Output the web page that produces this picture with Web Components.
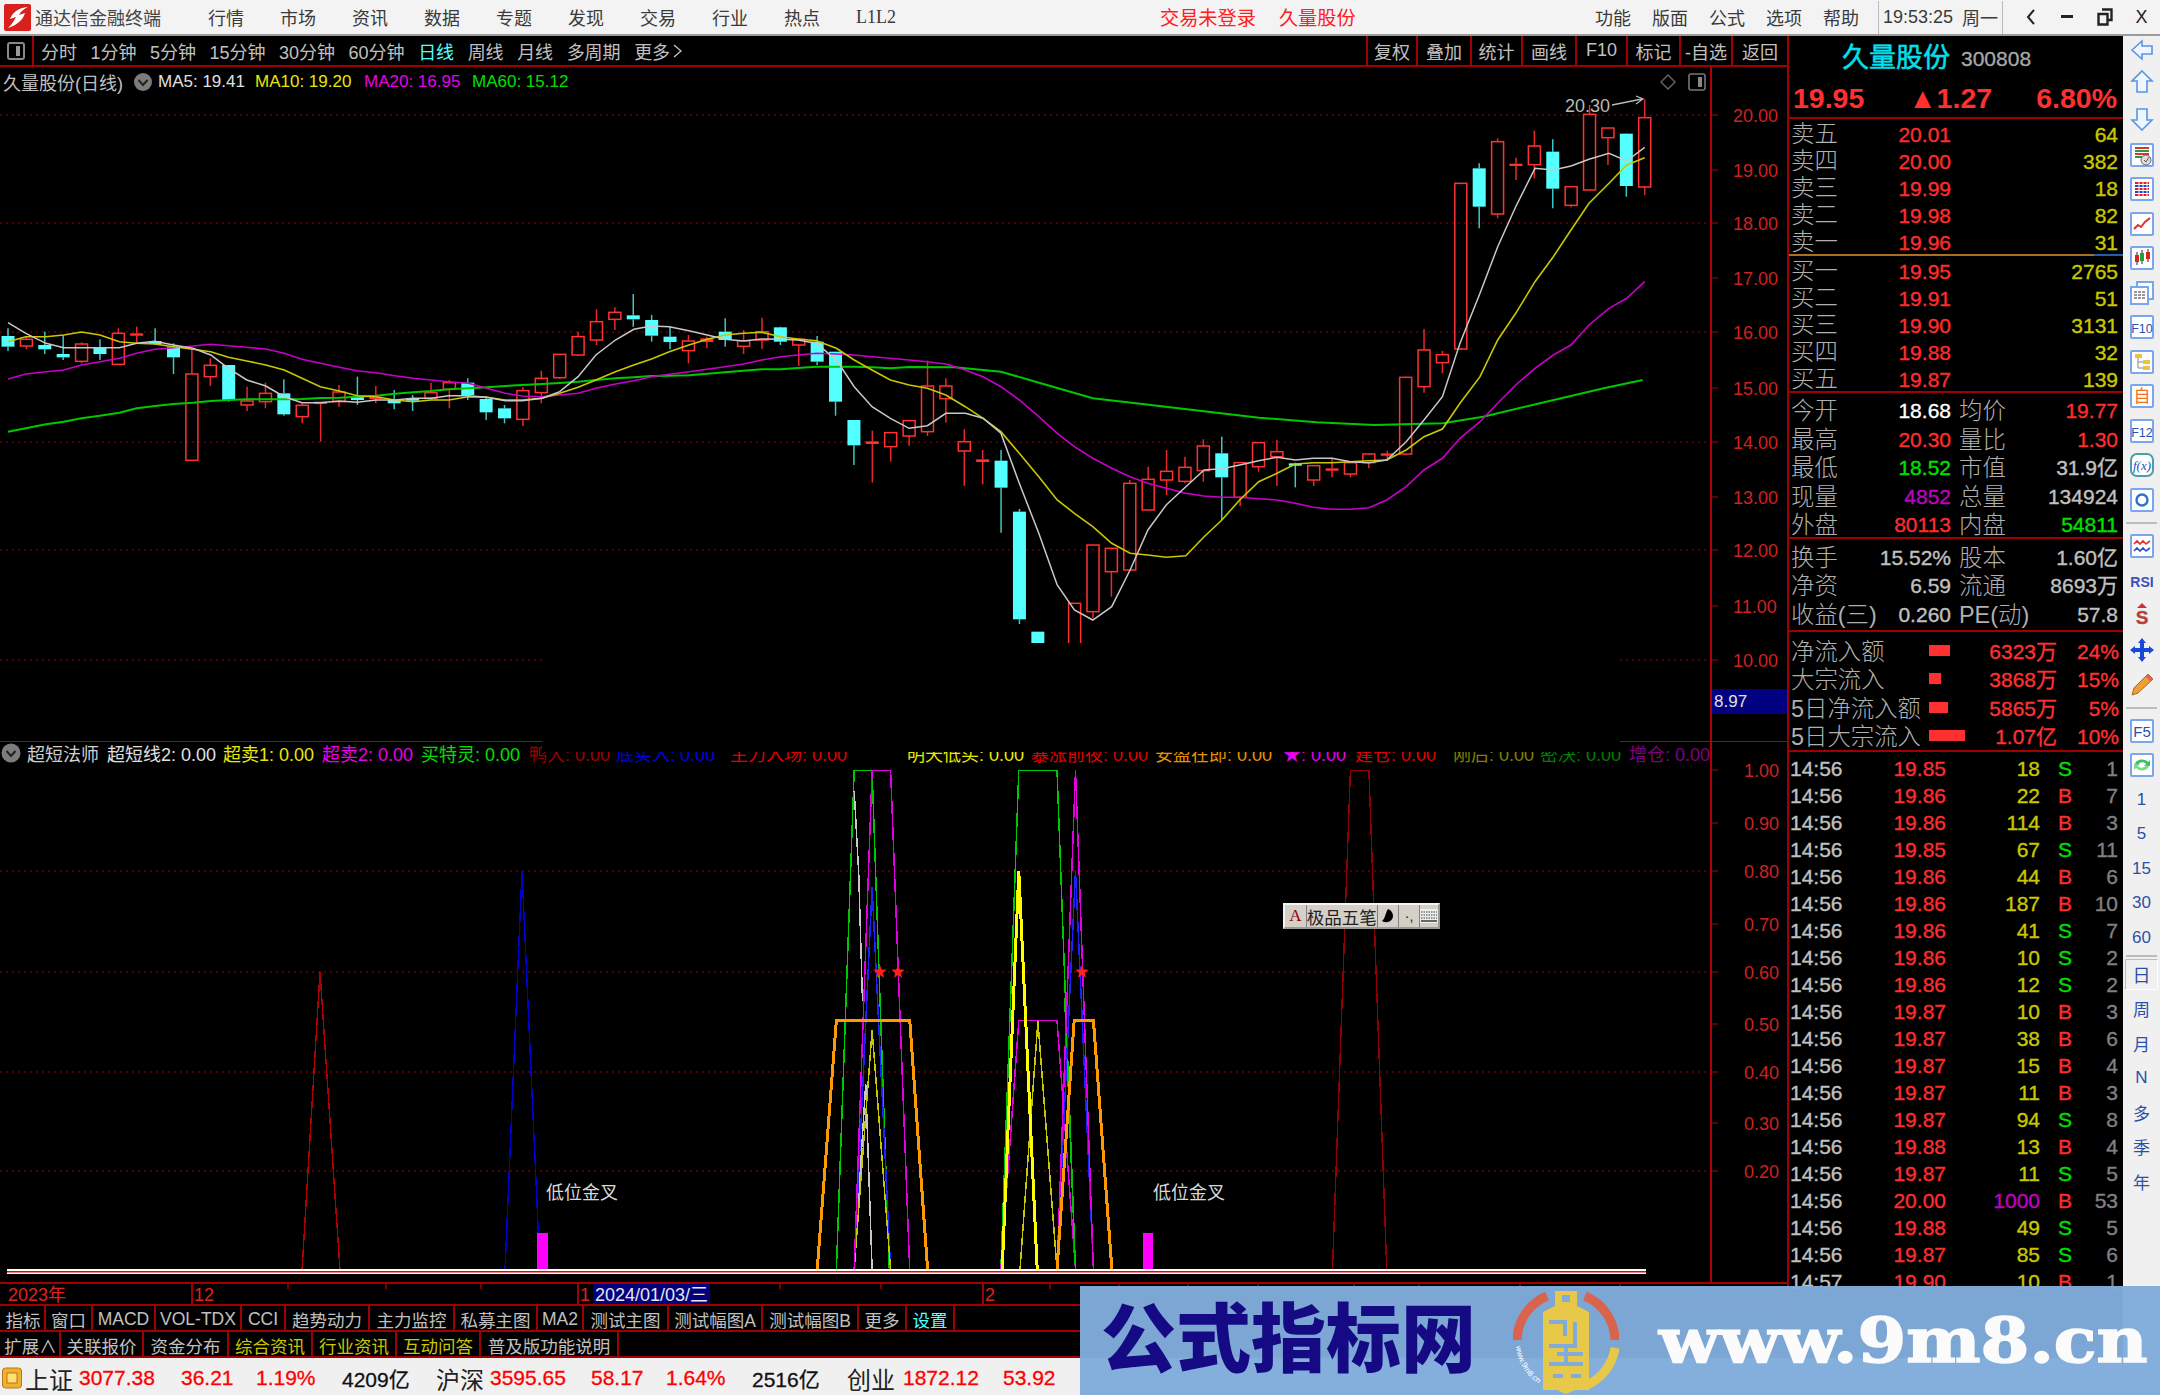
<!DOCTYPE html>
<html lang="zh">
<head>
<meta charset="utf-8">
<title>通达信金融终端</title>
<style>
html, body { margin: 0; background: #000; overflow: hidden; }
body { font-family: "Liberation Sans", "Noto Sans CJK SC", sans-serif; }
</style>
</head>
<body>
<tdx-app>
    <title-bar slot="title"></title-bar>
    <period-bar slot="period"></period-bar>
    <k-chart slot="kline"></k-chart>
    <sub-chart slot="sub"></sub-chart>
    <time-axis slot="axis"></time-axis>
    <tab-strip slot="tabs">
        <tab-item style="width:44px">指标</tab-item>
        <tab-item style="width:47px">窗口</tab-item>
        <tab-item style="width:63px">MACD</tab-item>
        <tab-item style="width:86px">VOL-TDX</tab-item>
        <tab-item style="width:44px">CCI</tab-item>
        <tab-item style="width:84px">趋势动力</tab-item>
        <tab-item style="width:85px">主力监控</tab-item>
        <tab-item style="width:83px">私募主图</tab-item>
        <tab-item style="width:46px">MA2</tab-item>
        <tab-item style="width:85px">测试主图</tab-item>
        <tab-item style="width:94px">测试幅图A</tab-item>
        <tab-item style="width:96px">测试幅图B</tab-item>
        <tab-item style="width:48px">更多</tab-item>
        <tab-item style="width:48px;color:#54ffff">设置</tab-item>
    </tab-strip>
    <tab-strip slot="tabs">
        <tab-item style="width:59px">扩展∧</tab-item>
        <tab-item style="width:83px">关联报价</tab-item>
        <tab-item style="width:85px">资金分布</tab-item>
        <tab-item style="width:84px;color:#c8c800">综合资讯</tab-item>
        <tab-item style="width:84px;color:#c8c800">行业资讯</tab-item>
        <tab-item style="width:84px;color:#c8c800">互动问答</tab-item>
        <tab-item style="width:138px">普及版功能说明</tab-item>
    </tab-strip>
    <status-strip slot="status"></status-strip>
    <quote-panel slot="panel"></quote-panel>
    <side-rail slot="rail">
        <rail-btn icon="left" style="height:28px"></rail-btn>
        <rail-btn icon="up" style="height:36px"></rail-btn>
        <rail-btn icon="down" style="height:37.5px"></rail-btn>
        <rail-btn icon="check"></rail-btn>
        <rail-btn icon="grid"></rail-btn>
        <rail-btn icon="line"></rail-btn>
        <rail-btn icon="candle"></rail-btn>
        <rail-btn icon="docs"></rail-btn>
        <rail-btn icon="f10"></rail-btn>
        <rail-btn icon="tree"></rail-btn>
        <rail-btn icon="self"></rail-btn>
        <rail-btn icon="f12"></rail-btn>
        <rail-btn icon="fx"></rail-btn>
        <rail-btn icon="ring"></rail-btn>
        <rail-sep></rail-sep>
        <rail-btn icon="wave"></rail-btn>
        <rail-btn icon="rsi"></rail-btn>
        <rail-btn icon="sup"></rail-btn>
        <rail-btn icon="move"></rail-btn>
        <rail-btn icon="pencil"></rail-btn>
        <rail-sep></rail-sep>
        <rail-btn icon="f5"></rail-btn>
        <rail-btn icon="refresh"></rail-btn>
        <rail-btn>1</rail-btn>
        <rail-btn>5</rail-btn>
        <rail-btn>15</rail-btn>
        <rail-btn>30</rail-btn>
        <rail-btn>60</rail-btn>
        <rail-sep style="height:2px"></rail-sep>
        <rail-btn pressed>日</rail-btn>
        <rail-btn>周</rail-btn>
        <rail-btn>月</rail-btn>
        <rail-btn>N</rail-btn>
        <rail-btn>多</rail-btn>
        <rail-btn>季</rail-btn>
        <rail-btn>年</rail-btn>
    </side-rail>
    <water-mark slot="mark"></water-mark>
</tdx-app>

<script>
const RED_LINE = "#a00000";

// 整体框架
class TdxApp extends HTMLElement {
    constructor() {
        super();
        this.attachShadow({ mode: "open" });
        this.shadowRoot.innerHTML = `
            <style>
                :host { display: block; position: relative; width: 2160px; height: 1395px; overflow: hidden; background: #000; }
                .row { display: flex; height: 1322px; }
                .left { display: flex; flex-direction: column; width: 1787px; border-right: 2px solid ${RED_LINE}; }
                .patch { position: absolute; left: 542px; top: 643px; width: 1078px; height: 109px; background: #000; }
            </style>
            <slot name="title"></slot>
            <div class="row">
                <div class="left">
                    <slot name="period"></slot>
                    <slot name="kline"></slot>
                    <slot name="sub"></slot>
                    <slot name="axis"></slot>
                    <slot name="tabs"></slot>
                </div>
                <slot name="panel"></slot>
                <slot name="rail"></slot>
            </div>
            <slot name="status"></slot>
            <div class="patch"></div>
            <slot name="mark"></slot>
        `;
    }
}

// 标题栏
class TitleBar extends HTMLElement {
    constructor() {
        super();
        this.attachShadow({ mode: "open" });
        const menu = ["行情", "市场", "资讯", "数据", "专题", "发现", "交易", "行业", "热点"];
        const right = ["功能", "版面", "公式", "选项", "帮助"];
        this.shadowRoot.innerHTML = `
            <style>
                :host { display: flex; align-items: center; box-sizing: border-box; height: 36px; background: #f3f3f3; border-bottom: 2px solid #9c9c9c; color: #3a3a3a; font-size: 18px; white-space: nowrap; }
                .logo { margin-left: 4px; width: 27px; height: 27px; }
                .name { margin-left: 4px; color: #444; }
                .menu { display: flex; gap: 36px; margin-left: 47px; }
                .alert { display: flex; gap: 23px; margin-left: 264px; color: #ff2020; font-size: 19.2px; }
                .right { display: flex; gap: 21px; margin-left: auto; }
                .clock { display: flex; align-items: center; gap: 9px; box-sizing: border-box; height: 33px; margin: 0 9px 0 19px; padding: 0 4px; border-left: 1px solid #bbb; border-right: 1px solid #bbb; width: 125px; }
                .win { display: flex; }
                .win span { display: flex; align-items: center; justify-content: center; width: 37px; height: 33px; color: #222; }
                .l2 { padding-top: 3px; font-family: "Liberation Serif", serif; }
            </style>
            <svg class="logo" viewBox="0 0 27 27">
                <rect width="27" height="27" rx="2" fill="#d8201c"/>
                <path d="M24 3 C14 4 9 8 6 15 L12 13 C10 17 8 20 4 24 C13 21 19 16 21 9 L15 11 C17 7 20 5 24 3Z" fill="#fff"/>
            </svg>
            <span class="name">通达信金融终端</span>
            <div class="menu">${menu.map((m) => `<span>${m}</span>`).join("")}<span class="l2">L1L2</span></div>
            <div class="alert"><span>交易未登录</span><span>久量股份</span></div>
            <div class="right">${right.map((m) => `<span>${m}</span>`).join("")}</div>
            <div class="clock"><span>19:53:25</span><span>周一</span></div>
            <div class="win">
                <span><svg width="12" height="20" viewBox="0 0 12 20"><path d="M9 3 L3 10 L9 17" fill="none" stroke="#222" stroke-width="2"/></svg></span>
                <span><svg width="14" height="6" viewBox="0 0 14 6"><rect y="1" width="12" height="3" fill="#222"/></svg></span>
                <span><svg width="16" height="18" viewBox="0 0 16 18"><path d="M5 1.5H14.5V12H11M1.5 6H10.5V16.5H1.5Z" fill="none" stroke="#222" stroke-width="2.4"/></svg></span>
                <span>X</span>
            </div>
        `;
    }
}

// 周期工具条
class PeriodBar extends HTMLElement {
    constructor() {
        super();
        this.attachShadow({ mode: "open" });
        const periods = ["分时", "1分钟", "5分钟", "15分钟", "30分钟", "60分钟", "日线", "周线", "月线", "多周期"];
        const tools = [["复权", 50], ["叠加", 54], ["统计", 51], ["画线", 54], ["F10", 51], ["标记", 53], ["-自选", 52], ["返回", 56]];
        this.shadowRoot.innerHTML = `
            <style>
                :host { display: flex; align-items: stretch; box-sizing: border-box; height: 31px; border-bottom: 2px solid ${RED_LINE}; color: #c0c0c0; font-size: 18px; white-space: nowrap; }
                .toggle { display: flex; align-items: center; justify-content: center; width: 34px; border-right: 2px solid ${RED_LINE}; box-sizing: border-box; }
                .periods { display: flex; align-items: center; gap: 13.5px; margin-left: 7px; }
                .on { color: #54ffff; }
                .more { display: flex; align-items: center; gap: 3px; }
                .tools { display: flex; margin-left: auto; }
                .tools span { display: flex; align-items: center; justify-content: center; box-sizing: border-box; border-left: 2px solid ${RED_LINE}; }
            </style>
            <div class="toggle"><svg width="20" height="20" viewBox="0 0 20 20"><rect x="2" y="2" width="16" height="16" rx="2" fill="none" stroke="#888" stroke-width="2"/><rect x="10" y="5" width="4" height="10" fill="#999"/></svg></div>
            <div class="periods">
                ${periods.map((p) => `<span class="${p === "日线" ? "on" : ""}">${p}</span>`).join("")}
                <span class="more">更多<svg width="9" height="16" viewBox="0 0 9 16"><path d="M1 2 L8 8 L1 14" fill="none" stroke="#c0c0c0" stroke-width="1.4"/></svg></span>
            </div>
            <div class="tools">${tools.map(([t, w]) => `<span style="width:${w}px">${t}</span>`).join("")}</div>
        `;
    }
}

// 缩放图坐标换算成页面坐标
const z10 = (p) => p.map(([x, y]) => [x / 1.742, 280 + y / 3]);
const z11 = (p) => p.map(([x, y]) => [800 + x / 1.742, 270 + y / 3]);
const z12 = (p) => p.map(([x, y]) => [1380 + x / 3, 60 + y / 3]);
const pts = (p) => p.map(([x, y]) => `${x.toFixed(1)},${y.toFixed(1)}`).join(" ");

// K线: [颜色, 上影, 实体上, 实体下, 下影]
const BARS10 = [
    ["c",145,168,200,213],["r",170,178,198,208],["c",155,195,208,222],["c",165,222,232,240],["r",187,192,244,250],
    ["c",178,202,222,240],["r",145,160,253,255],["r",140,160,167,190],["c",145,183,192,195],["c",190,200,232,282],
    ["r",205,282,541,542],["r",235,256,290,318],["c",255,255,360,365],["r",320,363,375,393],["r",308,340,365,385],
    ["c",298,340,403,407],["r",370,376,410,430],["r",365,365,368,485],["r",315,336,365,380],["c",290,348,360,375],
    ["r",318,350,355,370],["c",330,360,370,388],["c",345,355,357,393],["r",308,338,355,360],["r",300,308,328,385],
    ["c",295,308,345,360],["c",350,357,397,420],["c",375,385,415,430],["r",322,332,418,438],["r",272,295,338,370],
    ["r",222,223,293,297],["r",155,170,225,228],["r",88,125,180,195],["r",82,97,118,150],["c",42,106,118,140],
    ["c",105,120,167,185],["c",140,170,186,208],["r",165,183,212,250],["r",170,175,186,205],["c",115,155,180,200],
    ["r",150,182,199,222],["r",113,155,180,207],["c",140,142,185,195],["r",175,178,195,258],
];
const BARS11 = [
    ["c",198,215,275,285],["c",245,245,395,437],["c",450,450,526,585],["r",482,514,522,638],["r",487,488,530,575],
    ["r",450,452,498,527],["r",272,348,485,498],["r",325,348,386,458],["r",478,515,543,648],["r",540,568,576,643],
    ["c",540,572,653,788],["c",717,725,1048,1062],["c",1085,1085,1125,1125],["c",1140,1140,1235,1240],["r",1000,1000,1300,1320],
    ["r",825,825,1025,1045],["r",835,835,905,980],["r",630,640,900,900],["r",590,628,720,720],["r",540,604,630,675],
    ["r",560,592,634,640],["r",508,528,602,635],["c",500,550,622,750],["r",578,578,682,708],["r",518,518,590,605],
    ["r",510,545,560,648],["c",578,580,583,652],["r",585,587,630,648],["r",565,595,599,622],["r",575,578,612,622],
    ["r",550,552,578,595],["r",542,550,553,573],["r",320,322,552,553],["r",177,240,350,368],["r",243,254,278,310],
];
const BARS12 = [
    ["r",370,370,867,870],["c",310,325,440,505],["r",235,245,462,475],["r",293,311,315,360],["r",212,258,314,355],
    ["c",238,275,386,445],["r",378,380,436,442],["r",135,163,390,390],["r",204,204,233,315],["c",220,221,378,410],
    ["r",118,173,381,405],
];

const MA_LINES = [
    ["#00c800", 2, [
        ...z10([[14,455],[45,445],[80,433],[111,425],[142,415],[174,407],[208,398],[238,385],[270,378],[302,372],[336,368],[367,363],[398,360],[430,358],[463,358],[495,358],[526,357],[558,354],[591,353],[622,350],[655,347],[688,341],[720,337],[751,333],[782,328],[816,325],[848,322],[880,318],[910,315],[944,312],[975,309],[1007,305],[1038,300],[1072,295],[1104,292],[1135,288],[1166,287],[1200,286],[1232,281],[1263,277],[1295,272],[1327,268],[1360,268],[1390,264],[1422,260],[1457,260],[1488,260],[1519,262],[1551,265]]),
        ...z11([[190,291],[270,292],[350,305],[430,345],[510,385],[600,403],[700,423],[800,443],[900,457],[1000,465],[1120,460],[1190,440],[1300,395],[1400,355],[1468,330]]),
    ]],
    ["#c800c8", 1.6, [
        ...z10([[14,297],[45,282],[80,275],[111,270],[142,255],[174,245],[208,235],[238,220],[270,208],[302,203],[336,198],[367,193],[398,197],[430,202],[463,207],[495,220],[526,238],[558,250],[591,262],[622,272],[655,278],[688,287],[720,295],[751,300],[782,305],[816,310],[848,325],[880,340],[910,348],[944,350],[975,345],[1007,340],[1038,325],[1072,312],[1104,302],[1135,290],[1166,283],[1200,275],[1232,268],[1263,260],[1295,252],[1327,240],[1360,230],[1390,225],[1422,220],[1457,222],[1488,225],[1519,230],[1551,235]]),
        ...z11([[190,270],[222,275],[254,282],[288,300],[319,320],[350,350],[382,390],[416,440],[448,490],[478,530],[510,565],[543,595],[575,620],[606,640],[638,655],[672,670],[704,678],[735,682],[766,682],[799,686],[831,690],[863,700],[894,712],[927,718],[959,718],[991,713],[1022,690],[1056,650],[1087,600],[1119,565]]),
        ...z12([[240,1135],[300,1085],[353,1030],[407,975],[465,925],[520,885],[573,855],[627,795],[687,745],[740,715],[794,665]]),
    ]],
    ["#c8c800", 1.6, [
        ...z10([[14,185],[45,170],[80,170],[111,165],[142,156],[174,165],[208,185],[238,190],[270,192],[302,200],[336,208],[367,215],[398,232],[430,243],[463,255],[495,270],[526,295],[558,320],[591,333],[622,347],[655,350],[688,360],[720,365],[751,360],[782,360],[816,350],[848,352],[880,360],[910,360],[944,355],[975,340],[1007,322],[1038,300],[1072,275],[1104,255],[1135,237],[1166,215],[1200,195],[1232,178],[1263,165],[1295,160],[1327,157],[1360,170],[1390,177],[1422,182],[1457,205],[1488,240],[1519,270],[1551,300]]),
        ...z11([[190,345],[222,355],[254,375],[288,410],[319,445],[350,485],[382,550],[416,620],[448,690],[478,730],[510,770],[543,820],[575,850],[606,855],[638,862],[672,857],[704,800],[735,750],[766,690],[799,635],[831,610],[863,582],[894,578],[927,578],[959,575],[991,572],[1022,570],[1056,540],[1087,500],[1119,477]]),
        ...z12([[240,1030],[300,950],[353,840],[407,760],[465,665],[520,590],[573,510],[627,430],[687,370],[740,315],[794,293]]),
    ]],
    ["#c8c8c8", 1.5, [
        ...z10([[14,128],[45,160],[80,190],[111,203],[142,203],[174,203],[208,203],[238,190],[270,184],[302,195],[336,205],[367,225],[398,265],[430,300],[463,318],[495,350],[526,368],[558,368],[591,363],[622,367],[655,360],[688,360],[720,355],[751,355],[782,347],[816,347],[848,352],[880,362],[910,362],[944,355],[975,335],[1007,290],[1038,225],[1072,180],[1104,148],[1135,138],[1166,140],[1200,152],[1232,165],[1263,178],[1295,183],[1327,177],[1360,178],[1390,180],[1422,190],[1457,240],[1488,320],[1519,380],[1551,415]]),
        ...z11([[190,475],[222,467],[254,430],[288,430],[319,445],[350,490],[382,640],[416,790],[448,945],[478,1020],[510,1050],[543,1010],[575,900],[606,780],[638,705],[672,650],[704,600],[735,596],[766,585],[799,572],[831,562],[863,570],[894,565],[927,565],[959,575],[991,578],[1022,570],[1056,515],[1087,450],[1119,380]]),
        ...z12([[240,850],[300,700],[353,560],[407,440],[465,325],[520,330],[573,318],[627,298],[687,280],[740,303],[794,262]]),
    ]],
];

function drawBars() {
    const conv = [[BARS10, 280], [BARS11, 270], [BARS12, 60]];
    const all = [];
    conv.forEach(([list, off]) => list.forEach((b) => all.push([b[0], ...b.slice(1).map((v) => off + v / 3)])));
    return all.map(([c, wt, bt, bb, wb], i) => {
        const x = 8 + 18.39 * i;
        const col = c === "c" ? "#54ffff" : "#ff3232";
        const wick = c === "c" ? "#3cc8c8" : "#e82828";
        let s = "";
        if (wt < bt) s += `<line x1="${x}" x2="${x}" y1="${wt}" y2="${bt}" stroke="${wick}" stroke-width="1.5"/>`;
        if (wb > bb) s += `<line x1="${x}" x2="${x}" y1="${bb}" y2="${wb}" stroke="${wick}" stroke-width="1.5"/>`;
        if (c === "c" || bb - bt < 4) {
            s += `<rect x="${x - 6.5}" y="${bt}" width="13" height="${Math.max(bb - bt, 2.4)}" fill="${col}"/>`;
        } else {
            s += `<rect x="${x - 6}" y="${bt}" width="12" height="${bb - bt}" fill="none" stroke="${col}" stroke-width="1.5"/>`;
        }
        return s;
    }).join("");
}

// 主图
class KChart extends HTMLElement {
    constructor() {
        super();
        this.attachShadow({ mode: "open" });
        const axis = [["20.00",115],["19.00",170],["18.00",223],["17.00",278],["16.00",332],["15.00",388],["14.00",442],["13.00",497],["12.00",550],["11.00",606],["10.00",660]];
        const dots = [115, 223, 332, 442, 550, 660];
        this.shadowRoot.innerHTML = `
            <style>
                :host { display: block; position: relative; height: 674px; }
                svg { display: block; position: absolute; left: 0; top: 0; }
                text { font: 18px "Liberation Sans", sans-serif; }
                .legend { position: absolute; left: 0; top: 0; right: 80px; height: 29px; display: flex; align-items: center; font-size: 17px; white-space: nowrap; }
                .box { position: absolute; left: 1712px; top: 622px; width: 75px; height: 25px; background: #000080; color: #e0e0e0; font-size: 17px; line-height: 25px; padding-left: 2px; box-sizing: border-box; }
            </style>
            <svg width="1787" height="674" viewBox="0 67 1787 674">
                ${dots.map((y) => `<line x1="0" x2="1711" y1="${y}" y2="${y}" stroke="#a00000" stroke-dasharray="2 4"/>`).join("")}
                ${drawBars()}
                ${MA_LINES.map(([c, w, p]) => `<polyline points="${pts(p)}" fill="none" stroke="${c}" stroke-width="${w}"/>`).join("")}
                <line x1="1711" x2="1711" y1="67" y2="741" stroke="#b00000" stroke-width="2"/>
                ${axis.map(([t, y]) => `<line x1="1711" x2="1718" y1="${y}" y2="${y}" stroke="#b00000"/><text x="1733" y="${y + 7}" fill="#d02020">${t}</text>`).join("")}
                <text x="1565" y="112" fill="#b8b8b8">20.30</text>
                <path d="M1612 105 L1642 99 M1636 96 L1643 99 L1636 104" fill="none" stroke="#b8b8b8" stroke-width="1.3"/>
                <polygon points="1668,75 1675,82 1668,89 1661,82" fill="none" stroke="#666" stroke-width="1.4"/>
                <rect x="1689" y="74" width="16" height="16" rx="2" fill="none" stroke="#777" stroke-width="1.6"/>
                <rect x="1698" y="77" width="4" height="10" fill="#888"/>
            </svg>
            <div class="legend">
                <span style="width:131px;margin-left:3px;color:#c0c0c0;font-size:18px">久量股份(日线)</span>
                <svg style="position:static;width:24px;height:20px" viewBox="0 0 24 20"><circle cx="9" cy="10" r="9" fill="#7c7c7c"/><path d="M4.5 8 L9 13 L13.5 8" fill="none" stroke="#222" stroke-width="2"/></svg>
                <span style="width:97px;color:#e0e0e0">MA5: 19.41</span>
                <span style="width:109px;color:#e8e800">MA10: 19.20</span>
                <span style="width:108px;color:#e800e8">MA20: 16.95</span>
                <span style="color:#00e000">MA60: 15.12</span>
            </div>
            <div class="box">8.97</div>
        `;
    }
}

// 副图的折线, 坐标取自缩放图
const Z = (p) => p.map(([x, y]) => [800 + x / 1.568, 730 + y / 2.8]);
const B = 1510;
const SUB_LINES = [
    ["#b00000", 1.4, [[302,1270],[320,972],[340,1270]]],
    ["#0000d0", 1.4, [[505,1270],[522,871],[540,1270]]],
    ["#900000", 1.4, Z([[835,B],[863,113],[892,113],[920,B]])],
    ["#00c800", 1.5, Z([[57,B],[85,113],[113,113],[140,B]])],
    ["#c8c8c8", 1.5, Z([[85,170],[92,400],[98,760]])],
    ["#c8c8c8", 1.5, Z([[85,B],[103,990],[113,B]])],
    ["#2020ff", 1.5, Z([[85,B],[113,440],[142,B]])],
    ["#c8c800", 1.5, Z([[85,B],[113,840],[142,B]])],
    ["#e000e0", 1.5, Z([[85,B],[113,113],[142,113],[172,B]])],
    ["#ff9900", 3, Z([[27,B],[57,812],[172,812],[200,B]])],
    ["#00c800", 1.5, Z([[315,B],[343,113],[403,113],[432,B]])],
    ["#e000e0", 1.5, Z([[315,B],[343,813],[403,813],[432,B]])],
    ["#c8c800", 1.5, Z([[345,B],[373,815],[403,B]])],
    ["#ffff00", 3, Z([[317,B],[343,395],[372,B]])],
    ["#00c800", 1.5, Z([[415,750],[432,B]])],
    ["#2020ff", 1.5, Z([[403,B],[432,395],[460,B]])],
    ["#e000e0", 1.5, Z([[403,B],[432,113],[460,B]])],
    ["#ff9900", 3, Z([[403,B],[430,812],[460,812],[489,B]])],
];

const star = (cx, cy, r) => {
    const p = [];
    for (let i = 0; i < 10; i++) {
        const a = -Math.PI / 2 + (i * Math.PI) / 5;
        const v = i % 2 ? r * 0.42 : r;
        p.push(`${(cx + v * Math.cos(a)).toFixed(1)},${(cy + v * Math.sin(a)).toFixed(1)}`);
    }
    return `<polygon points="${p.join(" ")}" fill="#ff2020"/>`;
};

// 副图
class SubChart extends HTMLElement {
    constructor() {
        super();
        this.attachShadow({ mode: "open" });
        const axis = [["1.00",770],["0.90",823],["0.80",871],["0.70",924],["0.60",972],["0.50",1024],["0.40",1072],["0.30",1123],["0.20",1171]];
        const dots = [871, 972, 1072, 1171];
        const legend = [
            ["超短线2: 0.00", 116, "#e0e0e0"], ["超卖1: 0.00", 99, "#e8e800"], ["超卖2: 0.00", 99, "#e800e8"],
            ["买特灵: 0.00", 108, "#00e000"], ["鸭大: 0.00", 87, "#a00000"], ["底买入: 0.00", 114, "#0000e0"],
            ["主力入场: 0.00", 177, "#e00000"], ["明天低买: 0.00", 124, "#e8e800"], ["暴涨前夜: 0.00", 124, "#e00000"],
            ["安盈在即: 0.00", 128, "#e89000"], ["★: 0.00", 72, "#e800e8"], ["建仓: 0.00", 98, "#e00000"],
            ["刚后: 0.00", 87, "#808000"], ["密决: 0.00", 89, "#008000"], ["增仓: 0.00", 80, "#800080"],
        ];
        this.shadowRoot.innerHTML = `
            <style>
                :host { display: block; position: relative; height: 541px; }
                svg.plot { display: block; position: absolute; left: 0; top: 0; }
                text { font: 18px "Liberation Sans", sans-serif; }
                .legend { position: absolute; left: 0; top: 0; height: 24px; display: flex; align-items: center; font-size: 18px; white-space: nowrap; }
                .tag { position: absolute; color: #d8d8d8; font-size: 18px; left: 546px; top: 437px; }
                .tag.two { left: 1153px; }
                .ime { position: absolute; left: 1283px; top: 162px; width: 157px; height: 26px; box-sizing: border-box; display: flex; background: #d4d0c8; border: 2px solid #f4f4f0; border-right-color: #999; border-bottom-color: #999; color: #222; font-size: 17px; white-space: nowrap; }
                .ime span { display: flex; align-items: center; justify-content: center; border-right: 1px solid #808080; height: 100%; }
            </style>
            <svg class="plot" width="1787" height="541" viewBox="0 741 1787 541">
                <line x1="0" x2="1787" y1="741" y2="741" stroke="#b00000" stroke-width="2"/>
                ${dots.map((y) => `<line x1="0" x2="1711" y1="${y}" y2="${y}" stroke="#a00000" stroke-dasharray="2 4"/>`).join("")}
                <g shape-rendering="crispEdges">
                    ${SUB_LINES.map(([c, w, p]) => `<polyline points="${pts(p)}" fill="none" stroke="${c}" stroke-width="${w}"/>`).join("")}
                </g>
                ${star(880, 972, 7)}${star(898, 972, 7)}${star(1082, 972, 7)}
                <rect x="537" y="1233" width="11" height="37" fill="#ff00ff"/>
                <rect x="1143" y="1233" width="10" height="37" fill="#ff00ff"/>
                <rect x="7" y="1269" width="1639" height="5" fill="#fff"/>
                <rect x="7" y="1271" width="1639" height="1.5" fill="#f00000"/>
                <line x1="1711" x2="1711" y1="741" y2="1282" stroke="#b00000" stroke-width="2"/>
                ${axis.map(([t, y]) => `<line x1="1711" x2="1718" y1="${y}" y2="${y}" stroke="#b00000"/><text x="1744" y="${y + 7}" fill="#d02020">${t}</text>`).join("")}
            </svg>
            <div class="legend">
                <svg style="width:27px;height:22px" viewBox="0 0 27 22"><circle cx="11" cy="11" r="9.5" fill="#7c7c7c"/><path d="M6.5 9 L11 14 L15.5 9" fill="none" stroke="#222" stroke-width="2"/></svg>
                <span style="width:80px;color:#d0d0d0">超短法师</span>
                ${legend.map(([t, w, c]) => `<span style="width:${w}px;color:${c}">${t}</span>`).join("")}
            </div>
            <span class="tag">低位金叉</span>
            <span class="tag two">低位金叉</span>
            <div class="ime">
                <span style="width:21px;color:#900000;font-family:'Liberation Serif',serif">A</span>
                <span style="width:71px;font-size:17.5px">极品五笔</span>
                <span style="width:21px"><svg width="14" height="16" viewBox="0 0 14 16"><path d="M7 1 C4 6 4 11 1 13 C6 16 12 13 12 8 C12 5 10 2 7 1Z" fill="#000"/></svg></span>
                <span style="width:20px;font-size:14px">·,</span>
                <span style="flex:1;border:0"><svg width="18" height="14" viewBox="0 0 18 14"><rect width="18" height="14" fill="#eee"/><path d="M1 3H17M1 6H17M1 9H17" stroke="#777" stroke-dasharray="1.5 1" stroke-width="1.6"/><rect x="1" y="11" width="16" height="2" fill="#666"/></svg></span>
            </div>
        `;
    }
}

// 时间轴
class TimeAxis extends HTMLElement {
    constructor() {
        super();
        this.attachShadow({ mode: "open" });
        const ticks = [288, 386, 481, 780, 881, 1050, 1119, 1188, 1258, 1354, 1419, 1520, 1620];
        this.shadowRoot.innerHTML = `
            <style>
                :host { display: flex; position: relative; box-sizing: border-box; height: 24px; border-top: 2px solid ${RED_LINE}; border-bottom: 2px solid ${RED_LINE}; color: #e02020; font-size: 18px; line-height: 22px; white-space: nowrap; }
                span { box-sizing: border-box; height: 20px; }
                .cut { border-left: 2px solid ${RED_LINE}; padding-left: 1px; }
                .now { background: #000080; color: #e8e8e8; width: 117px; padding-left: 2px; }
                svg { position: absolute; left: 0; top: 0; }
            </style>
            <span style="width:191px;padding-left:8px">2023年</span>
            <span class="cut" style="width:386px">12</span>
            <span class="cut" style="width:16px">1</span>
            <span class="now">2024/01/03/三</span>
            <span style="width:272px"></span>
            <span class="cut">2</span>
            <svg width="1787" height="5">${ticks.map((x) => `<line x1="${x}" x2="${x}" y1="0" y2="5" stroke="${RED_LINE}" stroke-width="1.5"/>`).join("")}</svg>
        `;
    }
}

class TabStrip extends HTMLElement {
    constructor() {
        super();
        this.attachShadow({ mode: "open" });
        this.shadowRoot.innerHTML = `
            <style>
                :host { display: flex; box-sizing: border-box; height: 26px; padding-left: 2px; border-bottom: 2px solid ${RED_LINE}; }
            </style>
            <slot></slot>
        `;
    }
}

class TabItem extends HTMLElement {
    constructor() {
        super();
        this.attachShadow({ mode: "open" });
        this.shadowRoot.innerHTML = `
            <style>
                :host { display: flex; align-items: center; justify-content: center; box-sizing: border-box; padding-top: 3px; border-right: 2px solid ${RED_LINE}; color: #c0c0c0; font-size: 17.5px; white-space: nowrap; }
            </style>
            <slot></slot>
        `;
    }
}

// 底部指数栏
class StatusStrip extends HTMLElement {
    constructor() {
        super();
        this.attachShadow({ mode: "open" });
        const cells = [
            ["上证", 54, "n"], ["3077.38", 102, "r"], ["36.21", 75, "r"], ["1.19%", 86, "r"], ["4209亿", 94, "k"],
            ["沪深", 54, "n"], ["3595.65", 101, "r"], ["58.17", 75, "r"], ["1.64%", 86, "r"], ["2516亿", 95, "k"],
            ["创业", 56, "n"], ["1872.12", 100, "r"], ["53.92", 77, "r"],
        ];
        this.shadowRoot.innerHTML = `
            <style>
                :host { display: flex; align-items: center; box-sizing: border-box; height: 37px; padding: 3px 0 0 2px; background: #f0f0f0; font-size: 21px; white-space: nowrap; }
                .icon { width: 23px; height: 24px; }
                .n { font-size: 24px; color: #222; }
                .r { color: #ff0000; -webkit-text-stroke: 0.3px #ff0000; }
                .k { color: #111; -webkit-text-stroke: 0.3px #111; }
            </style>
            <svg class="icon" viewBox="0 0 23 24"><rect x="0.5" y="2" width="19" height="20" rx="3" fill="#f0b030" stroke="#b87818"/><rect x="5" y="7" width="10" height="10" fill="#ffe070" stroke="#b87818"/></svg>
            ${cells.map(([t, w, c]) => `<span class="${c}" style="width:${w}px">${t}</span>`).join("")}
        `;
    }
}

// 右侧行情面板
class QuotePanel extends HTMLElement {
    constructor() {
        super();
        this.attachShadow({ mode: "open" });
        const R = "#ff2c2c", Y = "#c8c800", G = "#00e000", W = "#c0c0c0", P = "#c000c0";
        const book = (rows) => rows.map(([a, b, c]) => `<div class="book"><span class="lb">${a}</span><span class="num" style="color:${R}">${b}</span><span class="num" style="color:${Y}">${c}</span></div>`).join("");
        const stat = (rows) => rows.map(([a, b, bc, c, d, dc]) => `<div class="stat"><span class="lb">${a}</span><span class="num" style="color:${bc}">${b}</span><i></i><span class="lb">${c}</span><span class="num" style="color:${dc}">${d}</span></div>`).join("");
        const flow = [["净流入额", 21, "6323万", "24%"], ["大宗流入", 12, "3868万", "15%"], ["5日净流入额", 19, "5865万", "5%"], ["5日大宗流入", 36, "1.07亿", "10%"]];
        const ticks = [
            ["19.85","18","S","1"],["19.86","22","B","7"],["19.86","114","B","3"],["19.85","67","S","11"],["19.86","44","B","6"],
            ["19.86","187","B","10"],["19.86","41","S","7"],["19.86","10","S","2"],["19.86","12","S","2"],["19.87","10","B","3"],
            ["19.87","38","B","6"],["19.87","15","B","4"],["19.87","11","B","3"],["19.87","94","S","8"],["19.88","13","B","4"],
            ["19.87","11","S","5"],["20.00","1000","B","53"],["19.88","49","S","5"],["19.87","85","S","6"],
        ].map((r) => ["14:56", ...r]);
        ticks.push(["14:57","19.90","10","B","1"]);
        this.shadowRoot.innerHTML = `
            <style>
                :host { display: block; box-sizing: border-box; width: 334px; height: 1322px; overflow: hidden; color: ${W}; font-size: 21px; white-space: nowrap; }
                .name { display: flex; align-items: center; box-sizing: border-box; height: 44px; padding: 0 0 5px 53px; }
                .name b { font-size: 27px; font-weight: 400; color: #00e0f0; -webkit-text-stroke: 0.5px #00e0f0; }
                .name span { margin-left: 11px; margin-top: 7px; color: #a8a8a8; font-size: 21px; -webkit-text-stroke: 0.3px #a8a8a8; }
                .price { display: flex; justify-content: space-between; align-items: center; height: 37px; padding: 0 6px 0 4px; border-bottom: 2px solid ${RED_LINE}; color: #ff3030; font-size: 28.5px; font-weight: 700; }
                .lb { font-size: 23.4px; color: #b0b0b0; font-weight: 300; }
                .num { text-align: right; -webkit-text-stroke: 0.35px; }
                .book { display: grid; grid-template-columns: 95px 65px 167px; box-sizing: border-box; height: 27px; line-height: 27px; padding: 2px 0 0 2px; }
                .mid { height: 2px; background: linear-gradient(to right, #a87020 0, #a87020 305px, #2060a8 305px); }
                .end { box-sizing: border-box; border-bottom: 2px solid ${RED_LINE}; }
                .stat { display: grid; grid-template-columns: 88px 72px 8px 60px 99px; height: 28.5px; line-height: 28.5px; padding-left: 2px; }
                .stat i { display: block; }
                .flow { display: grid; grid-template-columns: 138px 64px 64px 62px; align-items: center; height: 28.5px; line-height: 28.5px; padding-left: 2px; color: #ff3030; }
                .flow .bar { display: block; height: 11px; background: #ff3030; margin-top: -3px; }
                .flow .amt { grid-column: 2 / 4; display: flex; justify-content: space-between; align-items: center; -webkit-text-stroke: 0.35px; }
                .tick { display: grid; grid-template-columns: 62px 94px 94px 18px 20px 40px; box-sizing: border-box; height: 27px; line-height: 27px; padding: 3px 0 0 1px; -webkit-text-stroke: 0.35px; }
            </style>
            <div class="name"><b>久量股份</b><span>300808</span></div>
            <div class="price"><span>19.95</span><span>▲1.27</span><span>6.80%</span></div>
            ${book([["卖五","20.01","64"],["卖四","20.00","382"],["卖三","19.99","18"],["卖二","19.98","82"],["卖一","19.96","31"]])}
            <div class="mid"></div>
            <div class="end">
                ${book([["买一","19.95","2765"],["买二","19.91","51"],["买三","19.90","3131"],["买四","19.88","32"],["买五","19.87","139"]])}
            </div>
            <div class="end" style="height:145.5px;padding-top:4px">
                ${stat([
                    ["今开","18.68","#fff","均价","19.77",R],
                    ["最高","20.30",R,"量比","1.30",R],
                    ["最低","18.52",G,"市值","31.9亿",W],
                    ["现量","4852",P,"总量","134924",W],
                    ["外盘","80113",R,"内盘","54811",G],
                ])}
            </div>
            <div class="end" style="height:93px;padding-top:5px">
                ${stat([
                    ["换手","15.52%",W,"股本","1.60亿",W],
                    ["净资","6.59",W,"流通","8693万",W],
                    ["收益(三)","0.260",W,"PE(动)","57.8",W],
                ])}
            </div>
            <div class="end" style="height:120px;padding-top:6px">
                ${flow.map(([l, w, a, p]) => `<div class="flow"><span class="lb">${l}</span><span class="amt"><span class="bar" style="width:${w}px"></span><span>${a}</span></span><span class="num">${p}</span></div>`).join("")}
            </div>
            ${ticks.map(([t, p, q, s, n]) => `<div class="tick"><span>${t}</span><span class="num" style="color:${R}">${p}</span><span class="num" style="color:${q === "1000" ? P : Y}">${q}</span><i></i><span style="color:${s === "S" ? G : R}">${s}</span><span class="num" style="color:#808080">${n}</span></div>`).join("")}
        `;
    }
}

// 右侧竖排按钮
const frame = (inner) => `<svg width="26" height="26" viewBox="0 0 26 26"><rect x="2" y="2" width="22" height="22" rx="1" fill="#fff" stroke="#7aa6ee" stroke-width="2"/>${inner}</svg>`;
const plain = (inner) => `<svg width="26" height="26" viewBox="0 0 26 26">${inner}</svg>`;
const frameText = (t, c, size) => frame(`<text x="13" y="19" text-anchor="middle" font-family="Liberation Sans, Noto Sans CJK SC, sans-serif" font-size="${size}" fill="${c}">${t}</text>`);
const dash = (y, c) => `<line x1="6" x2="20" y1="${y}" y2="${y}" stroke="${c}" stroke-width="2"/>`;
const RAIL_ICONS = {
    left: plain(`<path d="M3 13 L13 4 V9 H23 V17 H13 V22Z" fill="#eef6ff" stroke="#5a94e8" stroke-width="1.6"/>`),
    up: plain(`<path d="M13 2 L23 12 H18 V23 H8 V12 H3Z" fill="#eef6ff" stroke="#5a94e8" stroke-width="1.6"/>`),
    down: plain(`<path d="M13 24 L23 14 H18 V3 H8 V14 H3Z" fill="#eef6ff" stroke="#5a94e8" stroke-width="1.6"/>`),
    check: frame(`${dash(6, "#e03030")}${dash(9, "#20a040")}${dash(12, "#e03030")}${dash(15, "#20a040")}<circle cx="17" cy="18" r="5" fill="#ddd" stroke="#666"/><path d="M15 18 L17 20 L20 15" fill="none" stroke="#555"/>`),
    grid: frame(`${dash(7, "#e02020")}${dash(10, "#2040e0")}${dash(13, "#e02020")}${dash(16, "#2040e0")}${dash(19, "#e02020")}<path d="M10 5V21M14 5V21M18 5V21" stroke="#fff"/>`),
    line: frame(`<polyline points="5,18 9,14 12,16 16,11 21,7" fill="none" stroke="#e03030" stroke-width="2"/>`),
    candle: frame(`<path d="M8 7V20M13 5V19M19 4V17" stroke="#222"/><rect x="6" y="10" width="4" height="7" fill="#e02020"/><rect x="11" y="8" width="4" height="8" fill="#20a040"/><rect x="17" y="7" width="4" height="7" fill="#e02020"/>`),
    docs: plain(`<rect x="8" y="2" width="16" height="17" fill="#fff" stroke="#7aa6ee" stroke-width="2"/><rect x="2" y="7" width="17" height="17" fill="#fff" stroke="#7aa6ee" stroke-width="2"/><path d="M5 12H16M5 15H16M5 18H16" stroke="#777" stroke-width="1.6" stroke-dasharray="3 1"/>`),
    f10: frameText("F10", "#2a50b0", 12.5),
    tree: frame(`<rect x="6" y="5" width="7" height="4" fill="#f0c040"/><rect x="14" y="11" width="7" height="4" fill="#f0c040"/><rect x="14" y="17" width="7" height="4" fill="#f0c040"/><path d="M9 9V19H14M9 13H14" fill="none" stroke="#888"/>`),
    self: frameText("自", "#f07020", 17),
    f12: frameText("F12", "#2a50b0", 12.5),
    fx: plain(`<rect x="2" y="2" width="22" height="22" rx="6" fill="#fff" stroke="#4aa0a8" stroke-width="2"/><text x="13" y="18" text-anchor="middle" font-family="Liberation Serif, serif" font-style="italic" font-size="13" fill="#2a50b0">f(x)</text>`),
    ring: frame(`<circle cx="13" cy="13" r="5.5" fill="none" stroke="#3070c8" stroke-width="2.4"/>`),
    wave: frame(`<polyline points="5,11 8,8 11,11 14,8 17,11 21,8" fill="none" stroke="#e03030" stroke-width="1.6"/><polyline points="5,18 8,15 11,18 14,15 17,18 21,15" fill="none" stroke="#3050d0" stroke-width="1.6"/>`),
    rsi: plain(`<text x="13" y="19" text-anchor="middle" font-family="Liberation Sans, sans-serif" font-weight="700" font-size="14" fill="#3a50c0">RSI</text>`),
    sup: plain(`<path d="M13 1 L8 6 H18Z" fill="#d03030"/><text x="13" y="22" text-anchor="middle" font-family="Liberation Sans, sans-serif" font-weight="700" font-size="19" fill="#d03030" stroke="#777" stroke-width="0.4">S</text>`),
    move: plain(`<path d="M13 1 L17 6 H15 V11 H20 V9 L25 13 L20 17 V15 H15 V20 H17 L13 25 L9 20 H11 V15 H6 V17 L1 13 L6 9 V11 H11 V6 H9Z" fill="#1848d8"/>`),
    pencil: plain(`<path d="M19 3 L24 8 L9 22 L3 24 L5 17Z" fill="#f0a030" stroke="#a06820"/><path d="M19 3 L24 8 L21.5 10.5 L16.5 5.5Z" fill="#e06060"/>`),
    f5: frameText("F5", "#2a50b0", 15),
    refresh: frame(`<path d="M6 12 C7 7 16 6 19 10 L21 8 V14 H15 L17 12 C15 9 10 10 9 13Z" fill="#40c060"/><path d="M20 14 C19 19 10 20 7 16 L5 18 V12 H11 L9 14 C11 17 16 16 17 13Z" fill="#80d890"/>`),
};

class RailBtn extends HTMLElement {
    constructor() {
        super();
        this.attachShadow({ mode: "open" });
        const icon = this.getAttribute("icon");
        const pressed = this.hasAttribute("pressed");
        this.shadowRoot.innerHTML = `
            <style>
                :host { display: flex; align-items: center; justify-content: center; flex: none; height: 34.5px; color: #2a50a8; font-size: 17px; }
                .down { display: flex; align-items: center; justify-content: center; box-sizing: border-box; width: 33px; height: 31px; border: 1.5px solid; border-color: #bdbdbd #fff #fff #bdbdbd; font-size: 18px; }
            </style>
            ${icon ? RAIL_ICONS[icon] : pressed ? `<div class="down"><slot></slot></div>` : `<slot></slot>`}
        `;
    }
}

class RailSep extends HTMLElement {
    constructor() {
        super();
        this.attachShadow({ mode: "open" });
        this.shadowRoot.innerHTML = `
            <style>
                :host { display: flex; align-items: center; flex: none; height: 12px; }
                i { display: block; width: 100%; margin: 0 3px; height: 2px; background: #bcbcbc; }
            </style>
            <i></i>
        `;
    }
}

class SideRail extends HTMLElement {
    constructor() {
        super();
        this.attachShadow({ mode: "open" });
        this.shadowRoot.innerHTML = `
            <style>
                :host { display: flex; flex-direction: column; width: 37px; height: 1322px; background: #f0f0f0; }
            </style>
            <slot></slot>
        `;
    }
}

// 右下角水印
class WaterMark extends HTMLElement {
    constructor() {
        super();
        this.attachShadow({ mode: "open" });
        this.shadowRoot.innerHTML = `
            <style>
                :host { position: absolute; left: 1080px; top: 1286px; width: 1080px; height: 109px; display: flex; align-items: center; background: rgba(128, 171, 218, 0.97); white-space: nowrap; }
                .cn { flex: none; margin-left: 21px; font-size: 75px; line-height: 1; font-weight: 900; color: #150a84; width: 412px; }
                .logo { width: 106px; height: 106px; flex: none; }
                .en { flex: none; margin-left: 40px; font-family: "DejaVu Serif", "Liberation Serif", serif; font-weight: 700; font-size: 61px; color: #fbfbfb; -webkit-text-stroke: 1.5px #fbfbfb; transform: scaleX(1.15); transform-origin: left center; }
            </style>
            <span class="cn">公式指标网</span>
            <svg class="logo" viewBox="0 0 106 106">
                <defs><path id="ringText" d="M3 58 A50 50 0 0 0 44 103"/></defs>
                <path d="M4 52 A49 49 0 0 1 34 8" fill="none" stroke="#d9634c" stroke-width="9"/>
                <path d="M102 52 A49 49 0 0 0 72 8" fill="none" stroke="#d9634c" stroke-width="9"/>
                <path d="M102 60 A49 49 0 0 1 72 98" fill="none" stroke="#e8c848" stroke-width="9"/>
                <text font-family="Liberation Sans, sans-serif" font-size="8" fill="#fff"><textPath href="#ringText">www.9m8.cn</textPath></text>
                <path d="M42 3H64V18L76 24V102H62L53 106L44 102H30V24L42 18Z" fill="#e8c848"/>
                <rect x="49" y="7" width="8" height="7" fill="#80abda"/>
                <path d="M36 34H52V48M62 34V58H36M44 66H70M36 76H70M53 58V76M40 88H50M58 88H68" fill="none" stroke="#80abda" stroke-width="4"/>
            </svg>
            <span class="en">www.9m8.cn</span>
        `;
    }
}

// 注册自定义元素
customElements.define("rail-btn", RailBtn);
customElements.define("rail-sep", RailSep);
customElements.define("side-rail", SideRail);
customElements.define("tab-item", TabItem);
customElements.define("tab-strip", TabStrip);
customElements.define("title-bar", TitleBar);
customElements.define("period-bar", PeriodBar);
customElements.define("k-chart", KChart);
customElements.define("sub-chart", SubChart);
customElements.define("time-axis", TimeAxis);
customElements.define("status-strip", StatusStrip);
customElements.define("quote-panel", QuotePanel);
customElements.define("water-mark", WaterMark);
customElements.define("tdx-app", TdxApp);
</script>
</body>
</html>
